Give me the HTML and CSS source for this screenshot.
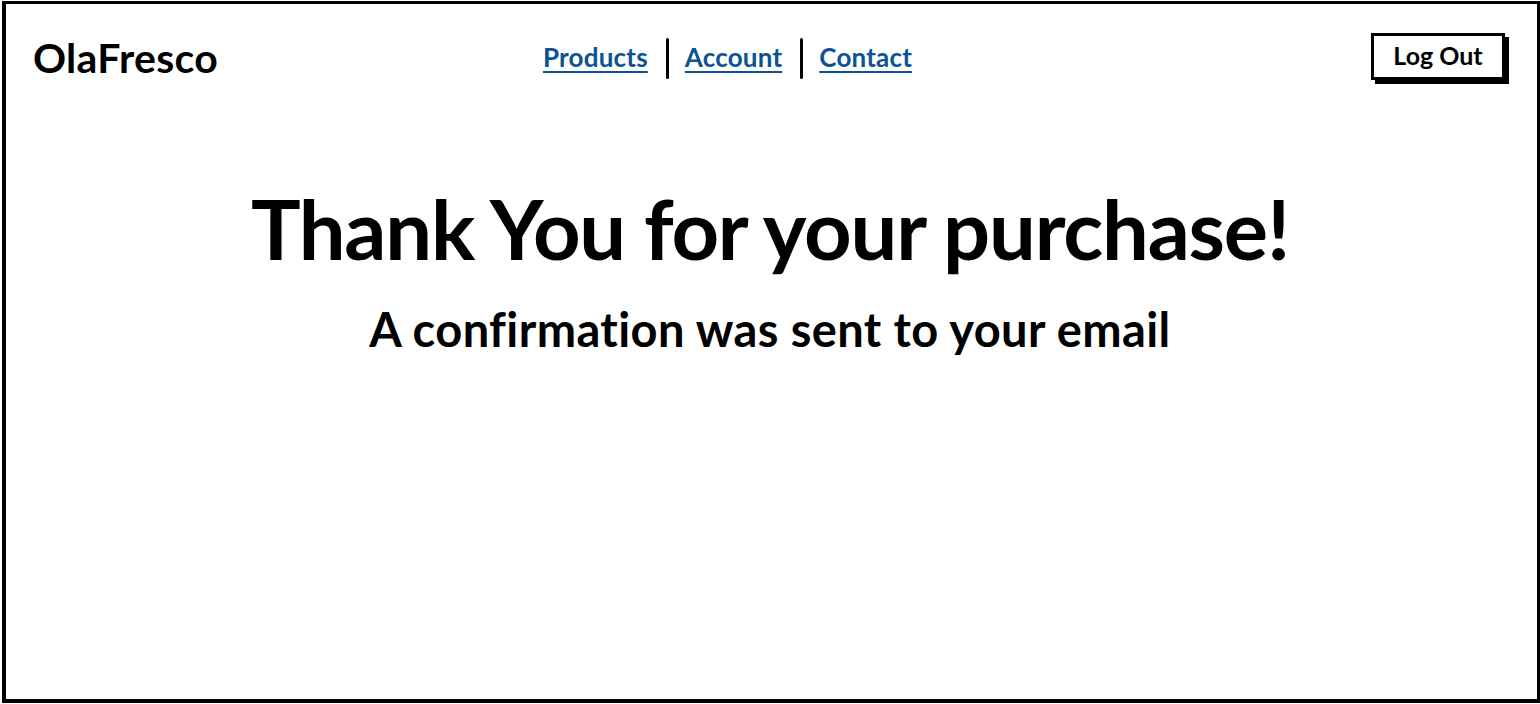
FILE: index.html
```html
<!DOCTYPE html>
<html>
<head>
<meta charset="utf-8">
<link rel="stylesheet" href="styles.css">
</head>
<body>
<div class="frame">
  <header class="header">
    <div class="logo">OlaFresco</div>
    <nav class="nav">
      <a href="#" class="nav-link">Products</a>
      <span class="sep"></span>
      <a href="#" class="nav-link">Account</a>
      <span class="sep"></span>
      <a href="#" class="nav-link">Contact</a>
    </nav>
    <button class="logout">Log Out</button>
  </header>
  <main class="content">
    <h1 class="title">Thank You for your purchase!</h1>
    <p class="subtitle">A confirmation was sent to your email</p>
  </main>
</div>
</body>
</html>
```
FILE: styles.css
```css
html, body {
  margin: 0;
  padding: 0;
  background: #fff;
}
body {
  font-family: "Lato", "Noto Sans", sans-serif;
  color: #000;
}
.frame {
  box-sizing: border-box;
  width: 1538px;
  height: 702px;
  margin: 1px 0 0 2px;
  border: 3px solid #000;
  border-left-width: 4px;
  border-bottom-width: 4px;
  padding: 0 30px 0 27px;
}
.header {
  display: flex;
  align-items: center;
  height: 106px;
  box-sizing: border-box;
}
.logo {
  font-size: 41px;
  font-weight: 700;
  letter-spacing: 0.3px;
  line-height: 1;
  width: 300px;
}
.nav {
  display: flex;
  align-items: center;
  margin-left: 210px;
}
.nav-link {
  font-size: 26px;
  font-weight: 700;
  color: #0b5394;
  text-decoration: underline;
  text-decoration-thickness: 2px;
  text-underline-offset: 4px;
  line-height: 1;
  letter-spacing: 0.2px;
}
.sep {
  display: block;
  width: 3px;
  height: 41px;
  background: #000;
  border-radius: 2px;
  margin: 2px 16px 0 18px;
}
.logout {
  margin-left: auto;
  margin-right: 2px;
  font-family: inherit;
  font-size: 25px;
  font-weight: 700;
  background: #fff;
  color: #000;
  border: 3px solid #000;
  width: 134px;
  height: 47px;
  padding: 0 0 2px 0;
  box-shadow: 4px 4px 0 #000;
  cursor: pointer;
  line-height: 1;
  margin-bottom: 2px;
}
.content {
  display: flex;
  flex-direction: column;
  align-items: center;
}
.title {
  margin: 77px 0 0 0;
  font-size: 83px;
  font-weight: 700;
  line-height: 1;
  letter-spacing: -1.2px;
}
.subtitle {
  margin: 36px 0 0 0;
  font-size: 47px;
  font-weight: 700;
  line-height: 1;
  letter-spacing: 0.4px;
}
```
